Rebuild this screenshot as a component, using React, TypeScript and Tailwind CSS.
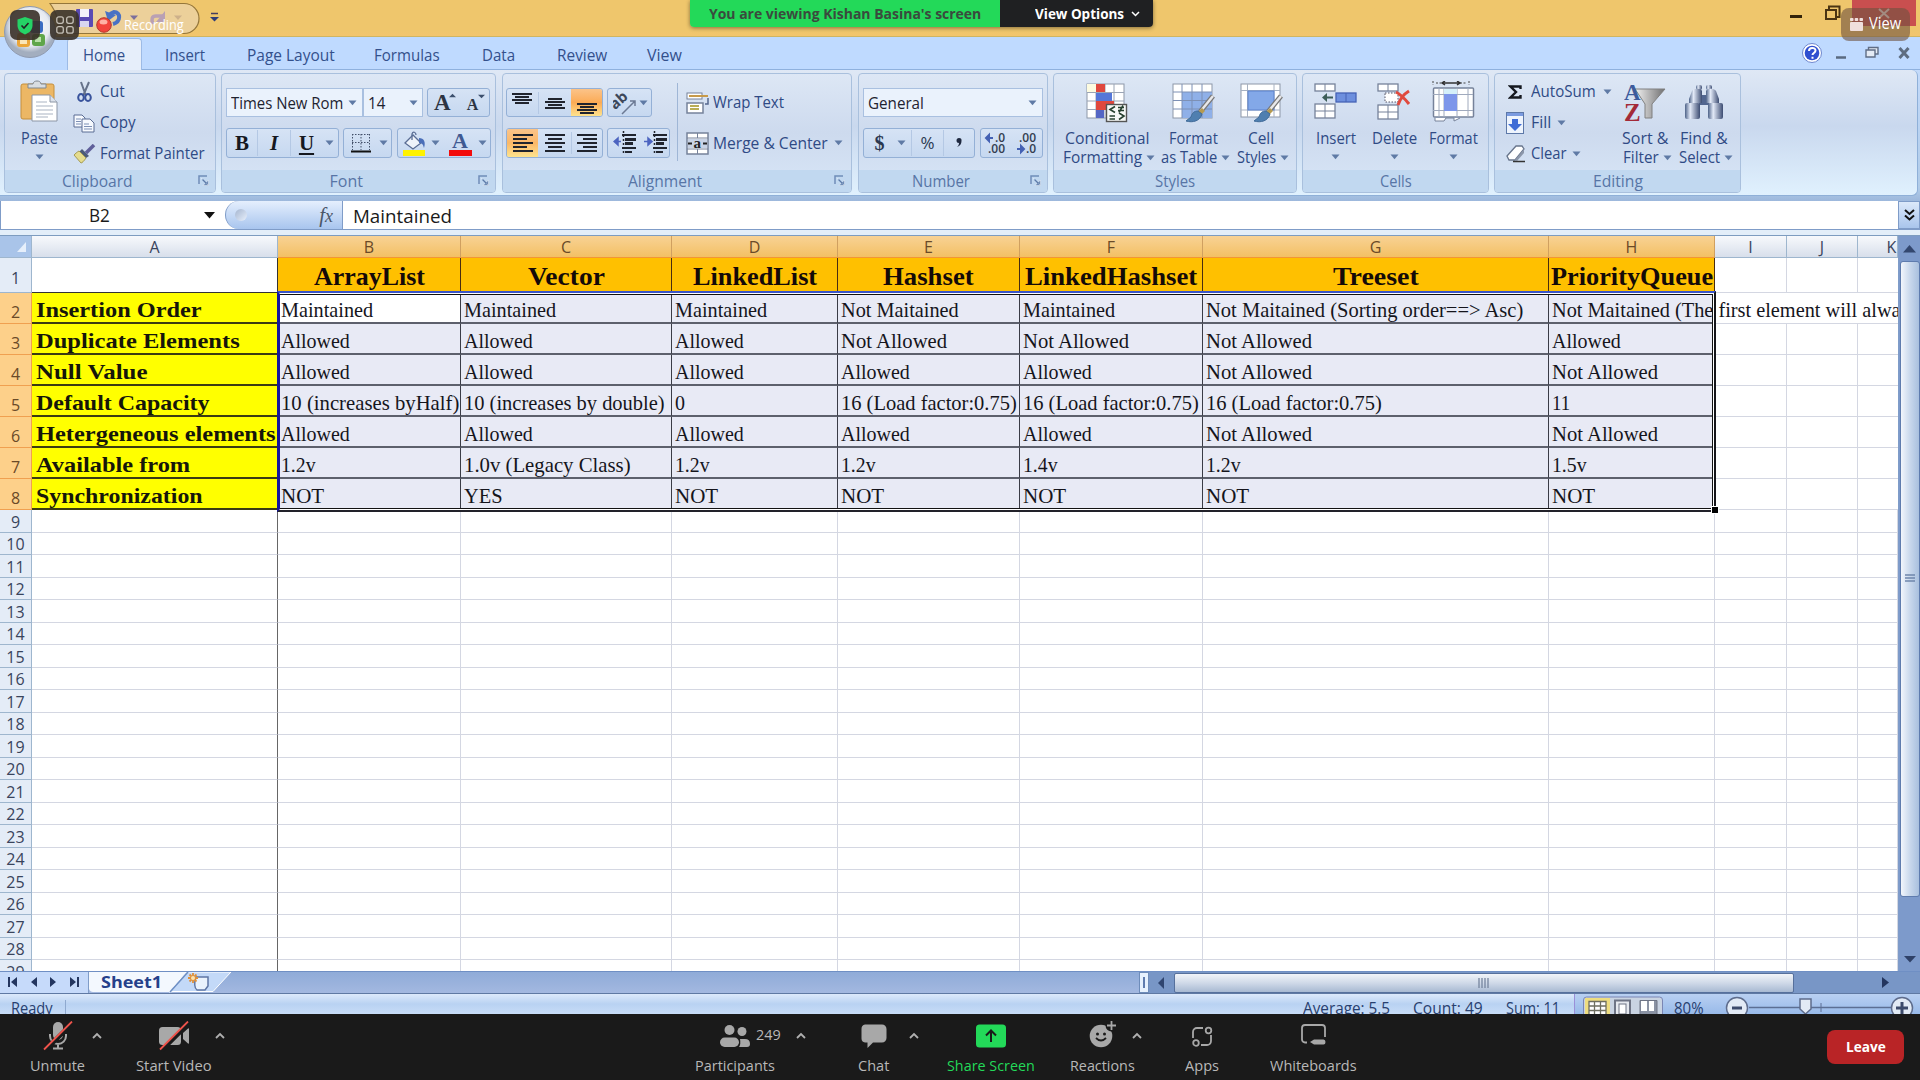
import React, { useLayoutEffect, useRef } from "react";

type Kids = { children?: React.ReactNode };

/* Text squeezed or stretched horizontally to a measured width. */
function Fit({ w, className = "", children }: { w: number; className?: string } & Kids) {
  const ref = useRef<HTMLSpanElement>(null);
  useLayoutEffect(() => {
    const el = ref.current;
    if (el) el.style.transform = `scaleX(${w / el.offsetWidth})`;
  }, [w]);
  return (
    <span className={`block shrink-0 whitespace-nowrap ${className}`} style={{ width: w }}>
      <span ref={ref} className="inline-block origin-left">
        {children}
      </span>
    </span>
  );
}

function Caret({ className = "" }: { className?: string }) {
  return (
    <svg className={`block shrink-0 ${className}`} width="9" height="6" viewBox="0 0 9 6">
      <path d="M0.5 0.5h8L4.5 5.3z" fill="#5f7aa5" />
    </svg>
  );
}

const UI = "text-[16px] leading-[19px] text-[#2f4a85]";

function Group({ label, lw, width, launcher, children }: { label: string; lw: number; width: string; launcher?: boolean } & Kids) {
  return (
    <div className={`flex h-[120px] shrink-0 flex-col overflow-hidden rounded-[4px] border border-[#a9c0dd] bg-linear-to-b from-[#dde7f5] via-[#cddaee] to-[#d8e6f7] ${width}`}>
      <div className="h-[96px] shrink-0">{children}</div>
      <div className="grid flex-1 grid-cols-[1fr_auto_1fr] items-center bg-[#c1d8f0]">
        <span />
        <Fit w={lw} className={`text-[16px] leading-[20px] text-[#5775a6] ${launcher ? "mr-[25px]" : ""}`}>{label}</Fit>
        {launcher ? (
          <svg className="mr-[6px] mb-[2px] justify-self-end" width="11" height="11" viewBox="0 0 11 11">
            <path d="M1 9V1h8" fill="none" stroke="#6f8db8" strokeWidth="1.500" />
            <path d="M3 3l7 7M10.500 5v5.500h-5.500z" fill="#6f8db8" stroke="#fff" strokeWidth=".4" />
            <path d="M4.500 4.500l4 4" stroke="#5d7ba8" strokeWidth="1.300" />
          </svg>
        ) : (
          <span />
        )}
      </div>
    </div>
  );
}

function Big({ icon, a, aw, b, bw, width }: { icon: React.ReactNode; a: string; aw: number; b?: string; bw?: number; width: string }) {
  return (
    <div className={`flex shrink-0 flex-col items-center pt-[9px] ${width}`}>
      <div className="flex h-[46px] items-start">{icon}</div>
      <Fit w={aw} className={UI}>{a}</Fit>
      {b ? (
        <div className="flex items-center gap-[4px] pl-[4px]">
          <Fit w={bw || 40} className={UI}>{b}</Fit>
          <Caret />
        </div>
      ) : (
        <Caret className="mt-[6px]" />
      )}
    </div>
  );
}

const box = "flex items-center rounded-[3px] border border-[#94b0d6] bg-linear-to-b from-[#d6e3f5] to-[#c6d8f0]";
const combo = "flex items-center border border-[#a9c0e0] bg-[#eaf2fc]";

function Lines({ rows }: { rows: number[][] }) {
  return (
    <svg className="shrink-0" width="20" height="22" viewBox="0 0 20 22" shapeRendering="crispEdges">
      {rows.map(([x, y, w], i) => (
        <rect key={i} x={x} y={y} width={w} height="2" fill="#20242e" />
      ))}
    </svg>
  );
}

function Indent({ right }: { right?: boolean }) {
  return (
    <svg width="24" height="24" viewBox="0 0 24 24">
      <path d="M9 4h14M9 17h14M12 21h7" stroke="#20242e" strokeWidth="1.800" />
      <path d="M12 8.500h11M12 12.500h8" stroke="#20242e" strokeWidth="3" />
      <path d="M10.500 0v24" stroke="#20242e" strokeWidth="1.500" strokeDasharray="2 2" />
      <path d={right ? "M0 10.500h5M4 7l4 3.500-4 3.500z" : "M8 10.500H4M5 7l-4 3.500 4 3.500z"} stroke="#4c64c0" strokeWidth="1.500" fill="#4c64c0" />
    </svg>
  );
}

function Brush() {
  return (
    <g>
      <path d="M41 13L28 29" stroke="#777" strokeWidth="5" />
      <path d="M41 13L28 29" stroke="#e8e8ea" strokeWidth="2.500" />
      <path d="M30 25l-5 5 3 3 5-5z" fill="#b59a50" />
      <path d="M26 28c-4 0-6 2-7 6l-5 4c7 2 14 0 16-7z" fill="#4f7fb0" stroke="#416b98" />
    </g>
  );
}

function CondIcon() {
  return (
    <svg width="42" height="40" viewBox="0 0 42 40">
      <rect x="1" y="1" width="37" height="34" fill="#fff" stroke="#8d97a8" />
      <path d="M1 9.500h37M1 18h37M1 26.500h37M10 1v34M19 1v34M28 1v34" stroke="#9aa4b5" />
      <rect x="10" y="1" width="9" height="8" fill="#e0483e" />
      <rect x="10" y="10" width="16" height="8" fill="#5577d8" />
      <rect x="10" y="18" width="18" height="9" fill="#e0483e" />
      <rect x="10" y="27" width="8" height="8" fill="#5566c4" />
      <rect x="1" y="1" width="9" height="8" fill="#fdfbe0" />
      <rect x="20.500" y="21.500" width="20" height="17" fill="#f6f8f6" stroke="#555" strokeWidth="1.400" />
      <path d="M29 23.500l-5 3 5 3M23.500 33h5.500M23.500 36h5.500M33 30l5 3-5 3.500M32 24.500h6M32 27.500h6M37 22.500l-4 7" stroke="#26402f" strokeWidth="1.600" fill="none" />
    </svg>
  );
}

function TableIcon() {
  return (
    <svg width="43" height="40" viewBox="0 0 43 40">
      <rect x="1" y="1" width="39" height="34" fill="#fff" stroke="#8d97a8" />
      <rect x="10" y="9" width="30" height="26" fill="#8fb0e8" />
      <path d="M1 9h39M1 17.500h39M1 26h39M10 1v34M20 1v34M30 1v34" stroke="#7d90b5" />
      <Brush />
    </svg>
  );
}

function CellIcon() {
  return (
    <svg width="43" height="40" viewBox="0 0 43 40">
      <rect x="1" y="1" width="39" height="33" fill="#fff" stroke="#8d97a8" />
      <path d="M1 7.500h39M1 27h39M7.500 1v33M34 1v33" stroke="#a8b2c2" />
      <rect x="8" y="8" width="26" height="19" fill="#83a8e8" stroke="#5d82cc" />
      <Brush />
    </svg>
  );
}

function MiniGrid({ x, y, rows }: { x: number; y: number; rows: number }) {
  return (
    <g>
      <rect x={x} y={y} width="20" height={rows * 7} fill="#fff" stroke="#76829a" strokeWidth="1.300" />
      <path d={`M${x + 10} ${y}v${rows * 7}`} stroke="#76829a" />
      {rows > 1 && <path d={`M${x} ${y + 7}h20`} stroke="#76829a" />}
    </g>
  );
}

function InsertIcon() {
  return (
    <svg width="43" height="40" viewBox="0 0 43 40">
      <MiniGrid x={1} y={1} rows={1} />
      <MiniGrid x={1} y={21} rows={2} />
      <rect x="22" y="10" width="20" height="9" fill="#6d8fde" stroke="#4663b5" strokeWidth="1.300" />
      <path d="M32 10v9" stroke="#4663b5" />
      <path d="M10 14.500h9" stroke="#3c5d58" strokeWidth="2" />
      <path d="M13 10l-5 4.500 5 4.500z" fill="#3c5d58" />
    </svg>
  );
}

function DeleteIcon() {
  return (
    <svg width="35" height="40" viewBox="0 0 35 40">
      <MiniGrid x={1} y={1} rows={1} />
      <MiniGrid x={1} y={22} rows={2} />
      <rect x="8" y="10" width="13" height="9" fill="#fff" stroke="#556" strokeDasharray="1.500 1.500" />
      <path d="M19 9c4 2 9 7 13 12M32 8c-5 3-9 8-11 14" stroke="#e04a3e" strokeWidth="3" fill="none" />
    </svg>
  );
}

function FormatIcon() {
  return (
    <svg className="-mt-[2px]" width="43" height="42" viewBox="0 0 43 42">
      <path d="M1 0v4M37 0v4M4 2h5M28 2h7" stroke="#444" strokeDasharray="2 1.500" />
      <path d="M11 2h16M13 0l-3 2 3 2M25 0l3 2-3 2" stroke="#333" strokeWidth="1.500" fill="none" />
      <path d="M3 37v3h9l2-3h8v3l6-3" fill="#fff" stroke="#76829a" />
      <rect x="1.500" y="7" width="40" height="29" rx="1" fill="#fff" stroke="#76829a" strokeWidth="1.500" />
      <path d="M1 13.500h40M1 29.500h40M7 7v29M12 7v29M25 7v29M36 7v29" stroke="#a0aabd" />
      <rect x="12" y="13" width="13" height="17" fill="#7d96ea" />
      <rect x="12" y="8" width="13" height="5" fill="#d5f0fa" />
    </svg>
  );
}

function SortIcon() {
  return (
    <svg className="-mt-[2px]" width="42" height="43" viewBox="0 0 42 43">
      <defs>
        <linearGradient id="fun" x1="0" x2="1">
          <stop offset="0" stopColor="#f2f2f2" />
          <stop offset="1" stopColor="#6f6f70" />
        </linearGradient>
      </defs>
      <path d="M11 8h30L28 23v14h-7V23z" fill="url(#fun)" stroke="#808080" />
      <text x="0" y="19" fontFamily="Liberation Serif" fontWeight="700" fontSize="23" fill="#3c5b9c">A</text>
      <text x="0" y="40" fontFamily="Liberation Serif" fontWeight="700" fontSize="25" fill="#a32a38">Z</text>
    </svg>
  );
}

function Binoculars() {
  return (
    <svg width="40" height="40" viewBox="0 0 40 40">
      <defs>
        <linearGradient id="bin" x1="0" x2="1">
          <stop offset="0" stopColor="#4d6288" />
          <stop offset=".35" stopColor="#e3eaf8" />
          <stop offset="1" stopColor="#3c4c72" />
        </linearGradient>
      </defs>
      <rect x="15" y="12" width="10" height="10" fill="#51658f" />
      <rect x="12" y="2" width="6" height="5" rx="2" fill="url(#bin)" />
      <rect x="22" y="2" width="6" height="5" rx="2" fill="url(#bin)" />
      <path d="M8 8c2-3 9-3 10 0v12H5v-4z" fill="url(#bin)" />
      <path d="M22 8c1-3 8-3 10 0l3 8v4H22z" fill="url(#bin)" />
      <rect x="1" y="20" width="15" height="16" rx="2" fill="url(#bin)" />
      <rect x="24" y="20" width="15" height="16" rx="2" fill="url(#bin)" />
    </svg>
  );
}

function PasteIcon() {
  return (
    <svg className="-mt-[3px]" width="38" height="43" viewBox="0 0 38 43">
      <rect x="1" y="4" width="33" height="35" rx="2" fill="#ecb765" stroke="#c58f3c" />
      <path d="M8 8V4h5c0-4 8-4 8 0h5v4z" fill="#d8dde2" stroke="#7f8790" />
      <path d="M12 15h18l7 7v19H12z" fill="#fff" stroke="#8b95a5" />
      <path d="M30 15v7h7" fill="#dde3ec" stroke="#8b95a5" />
      <path d="M16 22h11M16 26h17M16 30h17M16 34h17M16 37h12" stroke="#a9b3c2" />
    </svg>
  );
}

function TitleBar() {
  return (
    <div className="flex h-[37px] items-start border-b border-[#cfb562] bg-linear-to-b from-[#efc66c] from-85% to-[#f3c56d]">
      <svg width="240" height="37" viewBox="0 0 240 37">
        <path d="M50 3.500h134a15 15 0 0 1 0 30H56C60 20 56 12 50 3.500z" fill="#ecd09a" stroke="#94763a" strokeWidth="1.200" />
        <rect x="76" y="9" width="17" height="18" rx="1" fill="#5a4bb4" />
        <rect x="80" y="9" width="9" height="8" fill="#f3f3fb" />
        <rect x="80" y="21" width="9" height="6" fill="#d9d6f0" />
        <path d="M113 24c8-2 8-12 1-12l-4 2" fill="none" stroke="#4a72c4" strokeWidth="4" />
        <path d="M105 11l3 10 8-6z" fill="#4a72c4" />
        <path d="M130 15.500h8l-4 4.500z" fill="#7c6f9c" />
        <path d="M163 16h-7c-4 0-5 3-3 8" fill="none" stroke="#b9a0b4" strokeWidth="3.500" />
        <path d="M165 11v11h-9z" fill="#b9a0b4" />
        <path d="M174 15.500h8l-4 4.500z" fill="#cdb08a" />
        <path d="M211 13.500h7" stroke="#463d5e" strokeWidth="1.500" />
        <path d="M210 17h9l-4.500 4.500z" fill="#2f3d78" />
      </svg>
      <div className="ml-[450px] flex h-[27px] w-[463px] overflow-hidden rounded-b-[4px] shadow-[0_1px_4px_rgba(0,0,0,0.45)]">
        <div className="flex w-[310px] justify-center bg-[#23d959]">
          <Fit w={272} className="text-[15px] leading-[27px] font-bold text-[#3a4a3e]">You are viewing Kishan Basina's screen</Fit>
        </div>
        <div className="flex flex-1 items-center bg-[#1f2022] pl-[35px]">
          <Fit w={89} className="text-[15px] leading-[27px] font-bold text-white">View Options</Fit>
          <svg className="ml-[7px]" width="9" height="6" viewBox="0 0 9 6">
            <path d="M1 1l3.500 3.500L8 1" stroke="#fff" strokeWidth="1.500" fill="none" />
          </svg>
        </div>
      </div>
      <svg className="ml-[637px]" width="12" height="20" viewBox="0 0 12 20">
        <rect y="15" width="12" height="3" fill="#33230a" />
      </svg>
      <svg className="ml-[23px]" width="16" height="22" viewBox="0 0 16 22">
        <path d="M1 10h10v9H1zM4 9V6.500h10.500V17H12" fill="none" stroke="#4b3513" strokeWidth="2" />
      </svg>
      <div className="ml-[11px] flex h-[26px] w-[64px] items-center justify-center bg-[#c94f4f]">
        <svg width="12" height="11" viewBox="0 0 12 11">
          <path d="M1 1l10 9M11 1L1 10" stroke="#f0e0e0" strokeWidth="2" />
        </svg>
      </div>
    </div>
  );
}

function MeetingOverlays() {
  return (
    <>
      <svg className="absolute top-[5px] left-[3px]" width="54" height="54" viewBox="0 0 54 54">
        <defs>
          <radialGradient id="orb" cx=".5" cy=".4">
            <stop offset="0" stopColor="#fff" />
            <stop offset=".75" stopColor="#e6eaf1" />
            <stop offset="1" stopColor="#a3aebf" />
          </radialGradient>
        </defs>
        <circle cx="27" cy="27" r="25.500" fill="url(#orb)" stroke="#8f9ab0" />
        <rect x="14" y="28" width="13" height="14" rx="3" fill="#eba63a" />
        <rect x="17" y="33" width="7" height="6" fill="#fbe6b8" />
        <rect x="29" y="29" width="13" height="12" rx="3" fill="#5fa64a" />
        <rect x="32" y="32" width="6" height="5" fill="#b8e0a8" />
        <rect x="27" y="16" width="13" height="12" rx="3" fill="#3a6cc2" />
      </svg>
      <div className="absolute top-[10px] left-[10px] flex h-[30px] w-[30px] items-center justify-center rounded-[7px] bg-[#383028]/90">
        <svg width="18" height="19" viewBox="0 0 18 19">
          <path d="M9 1l7.500 2.500v6C16.500 14 13 17 9 18.500 5 17 1.500 14 1.500 9.500v-6z" fill="#25d366" />
          <path d="M5.500 9.500l2.500 2.500 4.500-5" stroke="#222" strokeWidth="1.600" fill="none" />
        </svg>
      </div>
      <div className="absolute top-[10px] left-[50px] flex h-[30px] w-[29px] items-center justify-center rounded-[7px] bg-[#3a322a]/90">
        <svg width="18" height="18" viewBox="0 0 18 18" fill="none" stroke="#c4bfb6" strokeWidth="1.300">
          <rect x=".8" y=".8" width="6.500" height="6.500" rx="2" />
          <rect x="10.700" y=".8" width="6.500" height="6.500" rx="2" />
          <rect x=".8" y="10.700" width="6.500" height="6.500" rx="2" />
          <rect x="10.700" y="10.700" width="6.500" height="6.500" rx="2" />
        </svg>
      </div>
      <div className="absolute top-[14px] left-[96px] flex items-center">
        <svg width="16" height="22" viewBox="0 0 16 22">
          <circle cx="8" cy="11" r="7.300" fill="#f2453c" stroke="#b53a2c" />
          <ellipse cx="7.500" cy="8" rx="4" ry="2.500" fill="#ffb3a4" />
        </svg>
        <Fit w={60} className="ml-[12px] text-[14px] leading-[22px] text-white">Recording</Fit>
      </div>
      <div className="absolute top-[8px] left-[1841px] flex h-[33px] w-[69px] items-center rounded-[8px] bg-[#6e5240]/60 pl-[9px]">
        <svg width="13" height="13" viewBox="0 0 13 13" fill="#f0dfdc">
          <rect y="4" width="13" height="9" rx="1" />
          <rect width="3.500" height="3" rx=".8" />
          <rect x="4.700" width="3.500" height="3" rx=".8" />
          <rect x="9.500" width="3.500" height="3" rx=".8" />
        </svg>
        <Fit w={32} className="mb-[4px] ml-[6px] text-[16px] leading-[24px] text-white">View</Fit>
      </div>
    </>
  );
}

function Tabs() {
  const tab = "text-[16px] leading-[20px] text-[#33508c]";
  return (
    <div className="flex h-[33px] items-end bg-[#bfdaff]">
      <div className="ml-[67px] flex h-[32px] w-[75px] items-center rounded-t-[4px] border border-b-0 border-[#9dbbe6] bg-[#e6eefa] pl-[15px]">
        <Fit w={42} className={tab}>Home</Fit>
      </div>
      <div className="flex h-[30px] flex-1 items-center border-b border-[#8fb1de]">
        <Fit w={40} className={`ml-[23px] ${tab}`}>Insert</Fit>
        <Fit w={88} className={`ml-[42px] ${tab}`}>Page Layout</Fit>
        <Fit w={66} className={`ml-[39px] ${tab}`}>Formulas</Fit>
        <Fit w={33} className={`ml-[42px] ${tab}`}>Data</Fit>
        <Fit w={50} className={`ml-[42px] ${tab}`}>Review</Fit>
        <Fit w={35} className={`ml-[40px] ${tab}`}>View</Fit>
        <svg className="ml-[1119px] -mt-[4px]" width="115" height="22" viewBox="0 0 115 22">
          <circle cx="11" cy="11" r="9.500" fill="#fff" stroke="#6f88cf" />
          <circle cx="11" cy="11" r="7.300" fill="#2f4fd0" />
          <path d="M8 9c0-4 6.500-4 6.500-.5C14.500 11 11.500 11 11.500 13M11.500 14.800v2" stroke="#fff" strokeWidth="2" fill="none" />
          <path d="M35 15.500h10" stroke="#5a6a80" strokeWidth="2.500" />
          <path d="M65 8h9v7h-9zM67.500 8V5.500h9.500V12h-2.500" fill="#e4ebf5" stroke="#5f6d85" strokeWidth="1.400" />
          <path d="M98.500 6l9 10M107.500 6l-9 10" stroke="#5f6d80" strokeWidth="3" />
        </svg>
      </div>
    </div>
  );
}

function Ribbon() {
  const row = "flex h-[31px] items-center";
  return (
    <div className="h-[131px] bg-linear-to-b from-[#c3dafa] via-[#b0cbe8] via-90% to-[#9db8dc]">
      <div className="flex h-[126px] w-[1918px] rounded-r-[6px] border-r border-b border-[#8fb0d8] bg-linear-to-b from-[#dfe8f5] via-[#c9d8ee] via-45% to-[#e0f1fe] pt-[3px] pl-[4px]">
        <Group label="Clipboard" lw={71} width="w-[212px]" launcher>
          <div className="flex">
            <Big icon={<PasteIcon />} a="Paste" aw={37} width="w-[68px]" />
            <div className="flex flex-col pt-[2px]">
              <div className={row}>
                <svg className="ml-[3px]" width="17" height="22" viewBox="0 0 17 22" fill="none">
                  <path d="M5 1l5 14M13 1L7 15" stroke="#66728a" strokeWidth="2" />
                  <ellipse cx="5" cy="16.500" rx="2.800" ry="3.500" stroke="#39539c" strokeWidth="2" />
                  <ellipse cx="12" cy="16.500" rx="2.800" ry="3.500" stroke="#39539c" strokeWidth="2" />
                </svg>
                <Fit w={25} className={`ml-[7px] ${UI}`}>Cut</Fit>
              </div>
              <div className={row}>
                <svg width="22" height="20" viewBox="0 0 22 20" fill="#f6f9fe" stroke="#5a6d94">
                  <path d="M1 2h8l3 3v9H1z" />
                  <path d="M9 6h8l4 4v9H9z" />
                  <path d="M3 6h5M3 8.500h5M3 11h5M11 11h5M11 13.500h8M11 16h8" stroke="#7d90b5" />
                </svg>
                <Fit w={36} className={`ml-[5px] ${UI}`}>Copy</Fit>
              </div>
              <div className={row}>
                <svg width="23" height="20" viewBox="0 0 23 20">
                  <path d="M21 1l-8 8" stroke="#5f5f9a" strokeWidth="3.500" />
                  <path d="M9 5l7 7-3 2-7-6z" fill="#4b5a78" />
                  <path d="M6 7l7 7c-2 3-4 5-5 5L1 11c1-1 3-3 5-4z" fill="#e5dc8e" stroke="#a39a55" />
                </svg>
                <Fit w={105} className={`ml-[4px] ${UI}`}>Format Painter</Fit>
              </div>
            </div>
          </div>
        </Group>

        <div className="ml-[5px] flex">
          <Group label="Font" lw={33} width="w-[275px]" launcher>
            <div className="flex h-[29px] pl-[4px] mt-[14px]">
              <div className={`${combo} w-[137px] pl-[4px]`}>
                <Fit w={112} className="text-[16px] leading-[20px] text-[#1e2330]">Times New Rom</Fit>
                <Caret className="ml-[5px]" />
              </div>
              <div className={`${combo} w-[60px] pl-[4px]`}>
                <Fit w={17} className="text-[16px] leading-[20px] text-[#1e2330]">14</Fit>
                <Caret className="ml-[24px]" />
              </div>
              <div className={`${box} ml-[4px] w-[63px] font-['Liberation_Serif']`}>
                <span className="ml-[6px] text-[23px] leading-[27px] font-bold text-[#2c3442]">A</span>
                <svg className="mb-[14px] -ml-[2px]" width="7" height="5" viewBox="0 0 8 5"><path d="M0 4.500L4 .5l4 4z" fill="#3c506e" /></svg>
                <span className="ml-[11px] pt-[5px] text-[16px] leading-[20px] font-bold text-[#2c3442]">A</span>
                <svg className="mb-[12px]" width="7" height="5" viewBox="0 0 8 5"><path d="M0 .5h8l-4 4z" fill="#3c506e" /></svg>
              </div>
            </div>
            <div className="mt-[11px] flex h-[30px] pl-[4px]">
              <div className={`${box} w-[113px] font-['Liberation_Serif'] text-[21px] leading-[26px] font-bold text-[#15181f]`}>
                <span className="w-[31px] border-r border-[#b4c8e4] text-center">B</span>
                <span className="w-[33px] border-r border-[#b4c8e4] text-center italic">I</span>
                <span className="w-[31px] text-center underline underline-offset-[3px]">U</span>
                <Caret className="ml-[3px]" />
              </div>
              <div className={`${box} ml-[4px] w-[49px] pl-[7px]`}>
                <svg width="20" height="20" viewBox="0 0 20 20">
                  <path d="M1 1.500h18M1 9.500h18M1.500 1v16M10 1v16M18.500 1v16" stroke="#43506a" strokeDasharray="1.500 1.500" />
                  <path d="M0 18.500h20" stroke="#111" strokeWidth="2" />
                </svg>
                <Caret className="ml-[8px]" />
              </div>
              <div className={`${box} ml-[5px] w-[94px] pl-[4px]`}>
                <svg width="25" height="25" viewBox="0 0 25 25">
                  <path d="M11 4l8 8-8 6-8-6z" fill="#eef3fa" stroke="#5a6d94" strokeWidth="1.300" />
                  <path d="M10 9V3c1-3 4-2 4 1" stroke="#5a6d94" fill="none" strokeWidth="1.300" />
                  <path d="M17 7c5 0 7 4 5 10-1-4-2-5-5-5z" fill="#4a6eb8" />
                  <rect x="1" y="19" width="22" height="6" fill="#fff200" />
                </svg>
                <Caret className="ml-[4px]" />
                <svg className="ml-[8px]" width="24" height="25" viewBox="0 0 24 25">
                  <text x="4" y="17" fontFamily="Liberation Serif" fontSize="22" fontWeight="700" fill="#3f5a92">A</text>
                  <rect x="1" y="19" width="23" height="6" fill="#f30b0b" />
                </svg>
                <Caret className="ml-[6px]" />
              </div>
            </div>
          </Group>
        </div>

        <div className="ml-[6px] flex">
          <Group label="Alignment" lw={74} width="w-[350px]" launcher>
            <div className="flex">
              <div className="w-[174px]">
                <div className="mt-[14px] flex h-[29px] pl-[3px]">
                  <div className={`${box} w-[97px] overflow-hidden`}>
                    <div className="flex w-[32px] justify-center border-r border-[#b4c8e4]"><Lines rows={[[0, 1, 20], [3, 4, 14], [0, 7, 20], [3, 10, 14]]} /></div>
                    <div className="flex w-[33px] justify-center"><Lines rows={[[3, 6, 14], [0, 9, 20], [3, 12, 14], [0, 15, 20]]} /></div>
                    <div className="flex h-[29px] w-[31px] items-center justify-center bg-linear-to-b from-[#fbc58c] via-[#fbab55] to-[#fde690]">
                      <Lines rows={[[0, 11, 20], [3, 14, 14], [0, 17, 20], [3, 20, 14]]} />
                    </div>
                  </div>
                  <div className={`${box} ml-[4px] w-[45px] pl-[5px]`}>
                    <svg width="25" height="24" viewBox="0 0 25 24">
                      <text x="0" y="14" transform="rotate(-42 8 14)" fontFamily="Open Sans" fontSize="15" fontWeight="700" fill="#3d475a">ab</text>
                      <path d="M9 23L22 10M22 15v-5h-5" stroke="#6c7a94" strokeWidth="1.500" fill="none" />
                    </svg>
                    <Caret className="ml-[1px]" />
                  </div>
                </div>
                <div className="mt-[11px] flex h-[30px] pl-[3px]">
                  <div className={`${box} w-[97px] overflow-hidden`}>
                    <div className="flex h-[30px] w-[31px] items-center justify-center bg-linear-to-b from-[#fbc58c] via-[#fbb868] to-[#fde690]">
                      <Lines rows={[[0, 2, 20], [0, 6, 14], [0, 10, 20], [0, 14, 14], [0, 18, 20]]} />
                    </div>
                    <div className="flex w-[33px] justify-center"><Lines rows={[[0, 2, 20], [3, 6, 14], [0, 10, 20], [3, 14, 14], [0, 18, 20]]} /></div>
                    <div className="flex w-[31px] justify-center border-l border-[#b4c8e4]"><Lines rows={[[0, 2, 20], [6, 6, 14], [0, 10, 20], [6, 14, 14], [0, 18, 20]]} /></div>
                  </div>
                  <div className={`${box} ml-[4px] w-[63px] gap-[7px] pl-[5px]`}>
                    <Indent />
                    <Indent right />
                  </div>
                </div>
              </div>
              <div className="mt-[9px] h-[78px] w-px bg-[#9fb6d6]" />
              <div className="pt-[14px] pl-[8px]">
                <div className="flex h-[29px] items-center">
                  <svg width="23" height="24" viewBox="0 0 23 24">
                    <rect x="1" y="2" width="15" height="6" fill="#fff" stroke="#76829a" />
                    <path d="M3 5h19" stroke="#c79a4a" strokeWidth="2" />
                    <rect x="1" y="12" width="16" height="10" fill="#fff" stroke="#76829a" strokeWidth="1.500" />
                    <path d="M4 15h9M4 18h9" stroke="#b9ad55" strokeWidth="2" />
                    <path d="M22 7v6h-3" stroke="#55678e" strokeWidth="1.500" fill="none" />
                  </svg>
                  <Fit w={71} className={`ml-[4px] ${UI}`}>Wrap Text</Fit>
                </div>
                <div className="mt-[11px] flex h-[30px] items-center">
                  <svg width="23" height="23" viewBox="0 0 23 23">
                    <rect x="1" y="1" width="21" height="21" fill="#fff" stroke="#76829a" strokeWidth="1.500" />
                    <path d="M1 6h21M1 17h21M11.500 1v5M11.500 17v5" stroke="#76829a" />
                    <rect x="2" y="7" width="19" height="9" fill="#c8d3e6" />
                    <text x="7.500" y="15.500" fontFamily="Liberation Serif" fontWeight="700" fontSize="15" fill="#222">a</text>
                    <path d="M2 11.500h4M17 11.500h4" stroke="#222" strokeWidth="2" />
                  </svg>
                  <Fit w={115} className={`ml-[4px] ${UI}`}>Merge &amp; Center</Fit>
                  <Caret className="ml-[6px]" />
                </div>
              </div>
            </div>
          </Group>
        </div>

        <div className="ml-[6px] flex">
          <Group label="Number" lw={58} width="w-[190px]" launcher>
            <div className="mt-[14px] flex h-[29px] pl-[4px]">
              <div className={`${combo} w-[180px] pl-[4px]`}>
                <Fit w={56} className="text-[16px] leading-[20px] text-[#1e2330]">General</Fit>
                <Caret className="ml-[104px]" />
              </div>
            </div>
            <div className="mt-[11px] flex h-[30px] pl-[4px]">
              <div className={`${box} w-[112px] text-[17px] leading-[26px] text-[#2b3850]`}>
                <span className="w-[31px] text-center font-['Liberation_Serif'] text-[20px] font-bold">$</span>
                <Caret className="ml-[2px]" />
                <span className="ml-[5px] w-[33px] border-x border-[#b4c8e4] text-center">%</span>
                <span className="flex w-[30px] justify-center">
                  <svg width="6" height="12" viewBox="0 0 6 12"><path d="M3 1a2.500 2.500 0 0 0 0 5c0 2-1 3-2 4 3-1 4.500-3 4.500-6A2.600 2.600 0 0 0 3 1z" fill="#1f2940" /></svg>
                </span>
              </div>
              <div className={`${box} ml-[5px] w-[63px]`}>
                <svg width="61" height="28" viewBox="0 0 61 28" fontFamily="Open Sans" fontSize="12" fontWeight="600" fill="#333d50">
                  <text x="14" y="13">.0</text>
                  <text x="7" y="24">.00</text>
                  <text x="38" y="13">.00</text>
                  <text x="45" y="24">.0</text>
                  <path d="M12 9H6M8 6L5 9l3 3z" stroke="#4461b4" strokeWidth="2" fill="#4461b4" />
                  <path d="M36 20h5M40 17l3 3-3 3z" stroke="#4461b4" strokeWidth="2" fill="#4461b4" />
                </svg>
              </div>
            </div>
          </Group>
        </div>

        <div className="ml-[5px] flex gap-[5px]">
          <Group label="Styles" lw={40} width="w-[244px]">
            <div className="flex">
              <Big icon={<CondIcon />} a="Conditional" aw={84} b="Formatting" bw={79} width="w-[105px]" />
              <Big icon={<TableIcon />} a="Format" aw={49} b="as Table" bw={56} width="w-[69px]" />
              <Big icon={<CellIcon />} a="Cell" aw={26} b="Styles" bw={39} width="w-[66px]" />
            </div>
          </Group>
          <Group label="Cells" lw={32} width="w-[187px]">
            <div className="flex">
              <Big icon={<InsertIcon />} a="Insert" aw={40} width="w-[65px]" />
              <Big icon={<DeleteIcon />} a="Delete" aw={45} width="w-[52px]" />
              <Big icon={<FormatIcon />} a="Format" aw={49} width="w-[66px]" />
            </div>
          </Group>
          <Group label="Editing" lw={50} width="w-[247px]">
            <div className="flex">
              <div className="w-[118px] pt-[2px] pl-[11px]">
                <div className={row}>
                  <svg className="ml-[2px]" width="14" height="14" viewBox="0 0 14 14">
                    <path d="M12.500 4V1.500H2.500L8 7l-5.500 5.500h10V10" fill="none" stroke="#15181f" strokeWidth="2.400" />
                  </svg>
                  <Fit w={65} className={`ml-[9px] ${UI}`}>AutoSum</Fit>
                  <Caret className="ml-[7px]" />
                </div>
                <div className={row}>
                  <svg width="18" height="22" viewBox="0 0 18 22">
                    <rect x=".5" y=".5" width="17" height="21" fill="#eef4fd" stroke="#5d78a8" />
                    <rect x="1" y="1" width="16" height="3" fill="#7b9be0" />
                    <path d="M6 7h6v5h4l-7 7-7-7h4z" fill="#3f6cd6" />
                  </svg>
                  <Fit w={20} className={`ml-[7px] ${UI}`}>Fill</Fit>
                  <Caret className="ml-[6px]" />
                </div>
                <div className={row}>
                  <svg width="20" height="18" viewBox="0 0 20 18">
                    <path d="M1 11L10 1h6l2 3-9 11H3z" fill="#fff" stroke="#68758c" strokeWidth="1.300" />
                    <path d="M9 15l9-11v4l-7 8z" fill="#8c97aa" />
                    <path d="M7 16.500h12" stroke="#333" strokeWidth="1.500" />
                  </svg>
                  <Fit w={36} className={`ml-[5px] ${UI}`}>Clear</Fit>
                  <Caret className="ml-[5px]" />
                </div>
              </div>
              <Big icon={<SortIcon />} a="Sort &amp;" aw={46} b="Filter" bw={36} width="w-[64px]" />
              <Big icon={<Binoculars />} a="Find &amp;" aw={48} b="Select" bw={41} width="w-[54px]" />
            </div>
          </Group>
        </div>
      </div>
    </div>
  );
}

function FormulaBar() {
  return (
    <div className="flex h-[35px] flex-col border-b border-[#7d9cc0] bg-[#e3eef9]">
      <div className="flex h-[29px] border-b border-[#7f9cc8] bg-white">
        <div className="flex w-[225px] items-center border-l border-[#7f9cc8]">
          <Fit w={21} className="ml-[88px] text-[18px] leading-[24px] text-[#1a1a1a]">B2</Fit>
          <svg className="ml-[94px]" width="11" height="7" viewBox="0 0 11 7"><path d="M0 0h11L5.500 6.500z" fill="#111" /></svg>
        </div>
        <div className="flex w-[118px] items-center justify-between rounded-l-full border-r border-l border-[#7f9cc8] bg-linear-to-b from-[#e5effd] to-[#a8c5ee] pr-[9px] pl-[9px]">
          <span className="h-[12px] w-[12px] rounded-full bg-linear-to-br from-[#a5b5cf] to-[#e9f1fd]" />
          <span className="font-['Liberation_Serif'] text-[21px] leading-[24px] text-[#4a5568] italic">f<span className="text-[18px]">x</span></span>
        </div>
        <div className="flex flex-1 items-center pl-[10px]">
          <Fit w={99} className="pt-px text-[18px] leading-[24px] text-[#1a1a1a]">Maintained</Fit>
        </div>
        <div className="flex w-[22px] items-center justify-center border border-[#7f9cc8] bg-linear-to-b from-[#dce9fa] to-[#a9c5ec]">
          <svg width="11" height="12" viewBox="0 0 11 12"><path d="M1 1l4.500 4L10 1M1 6.500l4.500 4 4.500-4" stroke="#111" strokeWidth="2" fill="none" /></svg>
        </div>
      </div>
    </div>
  );
}

const COLS = "grid grid-cols-[32px_246px_183px_211px_166px_182px_183px_346px_166px_72px_71px_40px]";

const HEADS: [string, number][] = [
  ["ArrayList", 111], ["Vector", 77], ["LinkedList", 124], ["Hashset", 91], ["LinkedHashset", 172], ["Treeset", 86], ["PriorityQueue", 162],
];

const M: [string, number] = ["Maintained", 92];
const NM: [string, number] = ["Not Maitained", 118];
const AL: [string, number] = ["Allowed", 69];
const NA: [string, number] = ["Not Allowed", 106];
const LF: [string, number] = ["16 (Load factor:0.75)", 176];
const NO: [string, number] = ["NOT", 43];

const ROWS: { label: [string, number]; cells: [string, number][] }[] = [
  { label: ["Insertion Order", 166], cells: [M, M, M, NM, M, ["Not Maitained (Sorting order==> Asc)", 317], ["Not Maitained (The first element will alwa", 349]] },
  { label: ["Duplicate Elements", 204], cells: [AL, AL, AL, NA, NA, NA, AL] },
  { label: ["Null Value", 111], cells: [AL, AL, AL, AL, AL, NA, NA] },
  { label: ["Default Capacity", 173], cells: [["10 (increases byHalf)", 178], ["10 (increases by double)", 201], ["0", 10], LF, LF, LF, ["11", 18]] },
  { label: ["Hetergeneous elements", 240], cells: [AL, AL, AL, AL, AL, NA, NA] },
  { label: ["Available from", 154], cells: [["1.2v", 35], ["1.0v (Legacy Class)", 167], ["1.2v", 35], ["1.2v", 35], ["1.4v", 35], ["1.2v", 35], ["1.5v", 35]] },
  { label: ["Synchronization", 167], cells: [NO, ["YES", 39], NO, NO, NO, NO, NO] },
];

const EMPTY = Array.from({ length: 21 }, (_, i) => i + 9);

function Sheet() {
  const serif = "font-['Liberation_Serif']";
  const num = "flex items-end justify-center border-r border-b text-[16px] leading-[20px]";
  return (
    <div className="relative h-[735px] w-[1898px] overflow-hidden bg-white">
      <div className={`${COLS} h-[22px] grid-rows-[22px] text-center text-[16px] leading-[23px] text-[#39445c]`}>
        <div className="flex items-end justify-end border-r border-b border-[#9eb6ce] bg-[#a9c4e9] p-[5px]">
          <svg width="9" height="10" viewBox="0 0 9 10"><path d="M9 0v10H0z" fill="#e6effb" /></svg>
        </div>
        {["A", "B", "C", "D", "E", "F", "G", "H", "I", "J", "K"].map((c, i) => (
          <div
            key={c}
            className={
              i > 0 && i < 8
                ? "border-r border-b border-r-[#d0a060] border-b-[#f29536] bg-linear-to-b from-[#f8d294] to-[#f3c063] text-[#6a4a28]"
                : "border-r border-b border-[#9eb6ce] bg-linear-to-b from-[#f7f9fc] to-[#d8dfeb]"
            }
          >
            <span className={c === "K" ? "ml-[28px]" : ""}>{c}</span>
          </div>
        ))}
      </div>

      <div className={`${COLS} h-[35px] grid-rows-[35px]`}>
        <div className={`${num} border-[#9eb6ce] bg-[#e4ecf7] pb-[4px] text-[#39445c]`}>1</div>
        <div className="border-r border-b border-[#333] bg-white" />
        {HEADS.map(([t, w]) => (
          <div key={t} className={`${serif} flex justify-center border-r border-b border-[#4a2c10] bg-[#ffc000] text-[25px] leading-[37px] font-bold text-[#140a08]`}>
            <Fit w={w}>{t}</Fit>
          </div>
        ))}
        <div className="border-r border-b border-[#d4d7e2]" />
        <div className="border-r border-b border-[#d4d7e2]" />
        <div className="border-b border-[#d4d7e2]" />
      </div>

      {ROWS.map((r, ri) => (
        <div key={ri} className={`${COLS} h-[31px] grid-rows-[31px]`}>
          <div className={`${num} border-[#f0a050] bg-[#fdd08a] pb-px text-[#6a4a28]`}>{ri + 2}</div>
          <div className={`${serif} border-b-2 border-[#3b3b12] bg-[#ffff00] pl-[4px] text-[22px] leading-[33px] font-bold text-[#16160a]`}>
            <Fit w={r.label[1]}>{r.label[0]}</Fit>
          </div>
          {r.cells.map(([t, w], ci) => (
            <div
              key={ci}
              className={`${serif} relative border-r border-b-2 border-r-[#3a3c46] border-b-[#5d606c] pl-[3px] text-[22px] leading-[34px] text-[#15151c] ${
                ri === 0 && ci === 0 ? "bg-white" : "bg-[#e8eaf5]"
              } ${ri === 0 && ci === 6 ? "z-10" : ""}`}
            >
              <Fit w={w}>{t}</Fit>
            </div>
          ))}
          <div className={`border-b border-[#d4d7e2] ${ri ? "border-r" : ""}`} />
          <div className={`border-b border-[#d4d7e2] ${ri ? "border-r" : ""}`} />
          <div className="border-b border-[#d4d7e2]" />
        </div>
      ))}

      {EMPTY.map((n) => (
        <div key={n} className={`${COLS} h-[22.5px] grid-rows-[22.5px]`}>
          <div className={`${num} border-[#9eb6ce] bg-[#e4ecf7] text-[#39445c]`}>
            <span className="h-[20px]">{n}</span>
          </div>
          <div className="border-r border-b border-r-[#666] border-b-[#d4d7e2]" />
          {[0, 1, 2, 3, 4, 5, 6, 7, 8, 9].map((c) => (
            <div key={c} className="border-r border-b border-[#d4d7e2]" />
          ))}
        </div>
      ))}

      {/* selection frame around B2:H8 */}
      <div className="absolute top-[55px] left-[277px] z-20 h-[221px] w-[1439px] border-2 border-t-[#3a55c8] border-r-[#15151a] border-b-[#22222a] border-l-[#1414a0]">
        <div className="h-full w-full border border-white border-l-[#1414a0]">
          <div className="h-full w-full border border-[#111] border-l-0" />
        </div>
      </div>
      <div className="absolute top-[270px] left-[1711px] z-20 h-[8px] w-[8px] border border-white bg-black" />
    </div>
  );
}

function VScroll() {
  return (
    <div className="flex w-[22px] flex-col items-center border-l border-[#7f9cc8] bg-[#7d9acb]">
      <svg className="mt-[9px]" width="13" height="8" viewBox="0 0 13 8"><path d="M0 7.500L6.500 0 13 7.500z" fill="#33476f" /></svg>
      <div className="mt-[8px] flex h-[636px] w-[20px] items-center justify-center rounded-[3px] border border-[#5f7cae] bg-linear-to-r from-[#f2f6fc] via-[#c9d8ec] to-[#a9c0de]">
        <svg width="10" height="10" viewBox="0 0 10 10"><path d="M0 1h10M0 4h10M0 7h10" stroke="#6f86ac" strokeWidth="1.300" /></svg>
      </div>
      <svg className="mt-[59px]" width="12" height="7" viewBox="0 0 12 7"><path d="M0 0h12L6 6.500z" fill="#2f4168" /></svg>
    </div>
  );
}

function SheetBar() {
  return (
    <div className="flex h-[23px] border-t border-b border-t-[#6f8fc4] border-b-[#5f79a3] bg-linear-to-b from-[#8fabd8] to-[#a3b8e0]">
      <div className="flex w-[89px] items-center border-r border-[#7f9cc8] bg-[#c6dafa] pb-[2px] pl-[8px]">
        <svg width="72" height="12" viewBox="0 0 72 12" fill="#24365f">
          <path d="M0 1h2v10H0zM9 1v10L3 6zM29 1v10l-6-5zM42 1v10l6-5zM62 1v10l6-5zM69 1h2v10h-2z" />
        </svg>
      </div>
      <svg width="145" height="21" viewBox="0 0 145 21">
        <path d="M0 0h97L80 20H4Q1 20 0 17z" fill="#f3f8fe" />
        <path d="M97 0h45L124 19.500H84L80 20z" fill="#c3d9f8" stroke="#fff" />
        <path d="M99 0L81 20" stroke="#6d8fc4" strokeWidth="1.500" />
        <path d="M107 5h12v9l-3 4h-8q-4-3-1-13z" fill="#eaf2fc" stroke="#5f76a4" strokeWidth="1.500" />
        <path d="M104 1v10M99 6h10M100.500 2.500l7 7M107.500 2.500l-7 7" stroke="#e09038" strokeWidth="1.800" />
        <circle cx="104" cy="6" r="2" fill="#fbe3b0" />
        <text x="12" y="16" fontFamily="Open Sans" fontSize="16" fontWeight="700" fill="#25408a" textLength="61" lengthAdjust="spacingAndGlyphs">Sheet1</text>
      </svg>
      <div className="ml-[905px] flex w-[10px] items-center justify-center border border-[#6d8cba] bg-[#e6f1fd]"><span className="h-[11px] w-[2px] bg-[#5f7cae]" /></div>
      <div className="flex flex-1 items-center bg-[#7896c6]">
        <svg className="ml-[9px]" width="6" height="12" viewBox="0 0 6 12"><path d="M6 0v12L0 6z" fill="#2f4570" /></svg>
        <div className="ml-[10px] flex h-[20px] w-[620px] items-center justify-center rounded-[2px] border border-[#56709c] bg-linear-to-b from-[#f1f4f9] via-[#cfd9e8] to-[#a8b9d2]">
          <svg className="mr-[2px]" width="11" height="10" viewBox="0 0 11 10"><path d="M1 0v10M4 0v10M7 0v10M10 0v10" stroke="#76859e" strokeWidth="1.300" /></svg>
        </div>
        <svg className="ml-[88px]" width="7" height="11" viewBox="0 0 7 11"><path d="M0 0v11l7-5.500z" fill="#24365f" /></svg>
      </div>
    </div>
  );
}

function StatusBar() {
  const t = "text-[16px] leading-[22px] text-[#28406f]";
  return (
    <div className="h-[20px] overflow-hidden bg-linear-to-b from-[#dce9fb] via-[#b9d2f2] to-[#c8dcf7]">
      <div className="flex h-[27px] items-center">
        <Fit w={42} className={`ml-[11px] ${t}`}>Ready</Fit>
        <span className="ml-[12px] h-[16px] w-px bg-[#8fa9cf]" />
        <Fit w={87} className={`ml-[1237px] ${t}`}>Average: 5.5</Fit>
        <Fit w={70} className={`ml-[23px] ${t}`}>Count: 49</Fit>
        <Fit w={54} className={`ml-[23px] ${t}`}>Sum: 11</Fit>
        <div className="ml-[14px] flex h-[27px] flex-1 items-center border-l border-[#9a8fd8] bg-linear-to-b from-[#b9d0f2] to-[#8db2e6]">
          <svg className="ml-[8px]" width="80" height="27" viewBox="0 0 80 27">
            <rect x=".5" y="3" width="79" height="26" rx="3" fill="#c9d3e2" stroke="#7a86b4" />
            <rect x="2" y="4" width="25" height="23" fill="#eedd80" />
            <path d="M6 7.500h17v16H6zM6 12h17M6 16.500h17M11.500 7v17M17.500 7v17" fill="#fff" stroke="#6e6e60" strokeWidth="1.300" />
            <rect x="32" y="6.500" width="15" height="17" fill="#e6e9ef" stroke="#6e7485" strokeWidth="2" />
            <rect x="36" y="10" width="7" height="10" fill="#fff" stroke="#6e7485" />
            <path d="M57 6.500h17v17H57z" fill="#8b93a4" stroke="#6e7485" />
            <path d="M58 7h6v10h-6zM66 7h5v10h-5z" fill="#fff" />
          </svg>
          <Fit w={30} className={`ml-[11px] ${t}`}>80%</Fit>
          <svg className="ml-[21px]" width="190" height="27" viewBox="0 0 190 27">
            <path d="M24 13.500h142" stroke="#5c6f94" strokeWidth="1.500" />
            <path d="M96 9v9" stroke="#5c6f94" />
            <circle cx="12" cy="14" r="10.500" fill="#e2eaf5" stroke="#5e6c8c" strokeWidth="1.500" />
            <path d="M7 14h10" stroke="#3c4a6b" strokeWidth="3" />
            <path d="M75 5h11v10l-5.500 5-5.500-5z" fill="#e2eaf5" stroke="#5e6c8c" strokeWidth="1.500" />
            <circle cx="177" cy="14" r="10.500" fill="#e2eaf5" stroke="#5e6c8c" strokeWidth="1.500" />
            <path d="M171 14h12M177 8v12" stroke="#3c4a6b" strokeWidth="3" />
          </svg>
        </div>
      </div>
    </div>
  );
}

function Up({ className }: { className: string }) {
  return (
    <svg className={`mt-[18px] shrink-0 ${className}`} width="10" height="7" viewBox="0 0 10 7">
      <path d="M1 6l4-4 4 4" stroke="#b0b0b0" strokeWidth="1.800" fill="none" />
    </svg>
  );
}

function Tool({ icon, label, lw, gap, green }: { icon: React.ReactNode; label: string; lw: number; gap: string; green?: boolean }) {
  return (
    <div className={`flex flex-col items-center ${gap}`}>
      <div className="flex h-[40px] items-start pt-[7px]">{icon}</div>
      <Fit w={lw} className={`text-[15px] leading-[22px] ${green ? "text-[#23d959]" : "text-[#b8b8b8]"}`}>{label}</Fit>
    </div>
  );
}

const G = "#a8a8a8";

function MeetingBar() {
  return (
    <div className="flex h-[66px] items-start bg-[#1a1a1a]">
      <Tool gap="ml-[30px]" label="Unmute" lw={55} icon={
        <svg width="30" height="31" viewBox="0 0 30 31">
          <rect x="10" y="1" width="10" height="18" rx="5" fill={G} />
          <path d="M7 13v2a8 8 0 0 0 16 0v-2M15 23v5M10 27.500h10" stroke={G} strokeWidth="2" fill="none" />
          <path d="M1.500 30L30 1.500" stroke="#1a1a1a" strokeWidth="4.500" />
          <path d="M1 28.500L29 .5" stroke="#f0544c" strokeWidth="1.800" />
        </svg>
      } />
      <Up className="ml-[7px]" />
      <Tool gap="ml-[34px]" label="Start Video" lw={76} icon={
        <svg width="31" height="31" viewBox="0 0 31 31">
          <rect x="0" y="6" width="22" height="18" rx="3.500" fill={G} />
          <path d="M24 12l5-4.500q1-.5 1 .5v14q0 1-1 .5L24 18z" fill={G} />
          <path d="M2 30L30 2" stroke="#1a1a1a" strokeWidth="4.500" />
          <path d="M1 28.500L29 .5" stroke="#f0544c" strokeWidth="1.800" />
        </svg>
      } />
      <Up className="ml-[3px]" />

      <Tool gap="ml-[470px]" label="Participants" lw={80} icon={
        <div className="flex w-[80px]">
          <svg className="ml-[25px] shrink-0" width="31" height="28" viewBox="0 0 31 28" fill={G}>
            <circle cx="9.500" cy="9" r="5" />
            <circle cx="22" cy="10.500" r="4.500" />
            <rect x="0" y="16.500" width="19" height="9.500" rx="4.700" />
            <path d="M20 18h5q5 0 5 5 0 3-3 3h-8q2-3 1-8z" />
          </svg>
          <Fit w={25} className="ml-[5px] text-[15px] leading-[26px] text-[#b8b8b8]">249</Fit>
        </div>
      } />
      <Up className="ml-[21px]" />
      <Tool gap="ml-[52px]" label="Chat" lw={31} icon={
        <svg width="26" height="28" viewBox="0 0 26 28">
          <path d="M4 3.500h17a4.500 4.500 0 0 1 4.500 4.500v9a4.500 4.500 0 0 1-4.500 4.500h-9L6.500 27v-5.500H4A4 4 0 0 1 .5 17.500V8A4.500 4.500 0 0 1 4 3.500z" fill={G} />
        </svg>
      } />
      <Up className="ml-[20px]" />
      <Tool gap="ml-[28px]" label="Share Screen" lw={88} green icon={
        <svg width="30" height="28" viewBox="0 0 30 28">
          <rect y="3.500" width="30" height="23" rx="3.500" fill="#23d959" />
          <path d="M15 21V10M10 14.500l5-5 5 5" stroke="#1a1a1a" strokeWidth="2" fill="none" />
        </svg>
      } />
      <Tool gap="ml-[35px]" label="Reactions" lw={65} icon={
        <svg width="27" height="28" viewBox="0 0 27 28">
          <circle cx="12" cy="15" r="11.300" fill={G} />
          <circle cx="22.500" cy="4.500" r="6" fill="#1a1a1a" />
          <path d="M22.500 0v9M18 4.500h9" stroke={G} strokeWidth="1.800" />
          <circle cx="8.500" cy="13" r="1.500" fill="#1a1a1a" />
          <circle cx="15.500" cy="13" r="1.500" fill="#1a1a1a" />
          <path d="M7 17q5 5 10 0" stroke="#1a1a1a" strokeWidth="1.800" fill="none" />
        </svg>
      } />
      <Up className="-ml-[3px]" />
      <Tool gap="ml-[43px]" label="Apps" lw={34} icon={
        <svg width="21" height="28" viewBox="0 0 21 28" fill="none" stroke={G} strokeWidth="1.800">
          <path d="M11 7H5a4 4 0 0 0-4 4v6M19 14v6a4 4 0 0 1-4 4H9" />
          <circle cx="16.500" cy="9.500" r="2.800" />
          <circle cx="4" cy="22" r="2.800" />
        </svg>
      } />
      <Tool gap="ml-[51px]" label="Whiteboards" lw={87} icon={
        <svg width="25" height="28" viewBox="0 0 25 28">
          <path d="M6 21.500H4A3 3 0 0 1 1 18.500V7a3 3 0 0 1 3-3h17a3 3 0 0 1 3 3v9" fill="none" stroke={G} strokeWidth="1.800" />
          <path d="M9 21l4-2.500h9.500q2 0 2 2.500t-2 2.500H13z" fill={G} />
        </svg>
      } />
      <div className="mt-[16px] ml-[470px] flex h-[34px] w-[77px] items-center justify-center rounded-[8px] bg-[#b92426] pb-[2px]">
        <Fit w={40} className="text-[15px] leading-[22px] font-bold text-white">Leave</Fit>
      </div>
    </div>
  );
}

export default function App() {
  return (
    <div className="relative h-[1080px] w-[1920px] overflow-hidden bg-[#9db8dc] font-['Open_Sans',sans-serif]">
      <TitleBar />
      <Tabs />
      <Ribbon />
      <FormulaBar />
      <div className="flex h-[735px]">
        <Sheet />
        <VScroll />
      </div>
      <SheetBar />
      <StatusBar />
      <MeetingBar />
      <MeetingOverlays />
    </div>
  );
}
